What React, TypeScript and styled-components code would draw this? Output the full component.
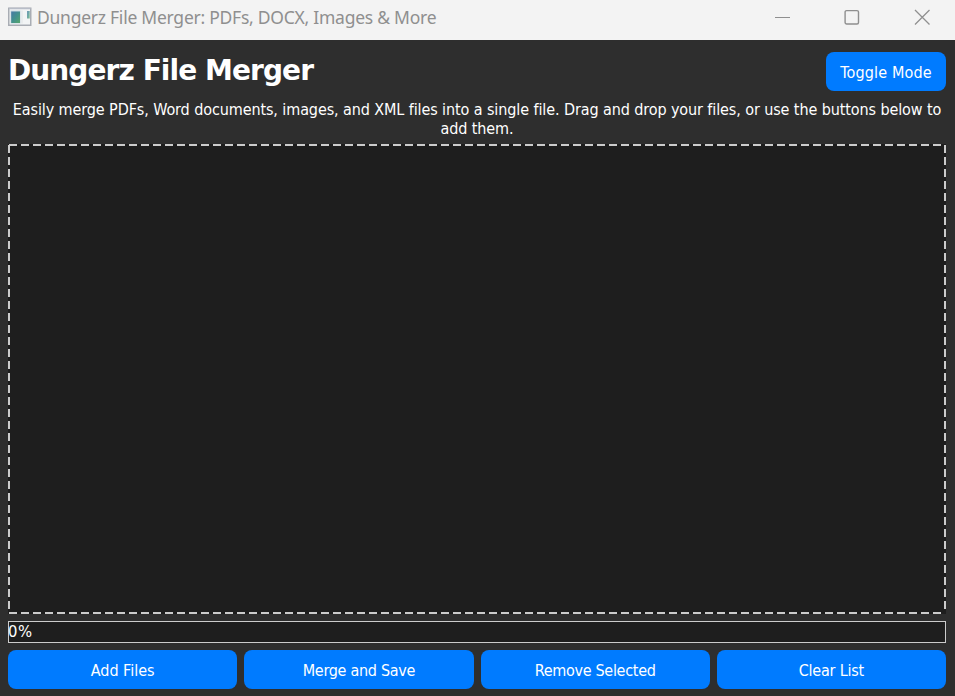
import React from "react";
import styled, { createGlobalStyle } from "styled-components";

const GlobalStyle = createGlobalStyle`
  * { box-sizing: border-box; }
  body { margin: 0; background: #2e2e2e; }
`;

const Window = styled.div`
  display: flex;
  flex-direction: column;
  width: 100%;
  height: 100vh;
  min-height: 696px;
  overflow: hidden;
  background: #2e2e2e;
  color: #fff;
  font: 16px/19px "DejaVu Sans Condensed", "DejaVu Sans", sans-serif;
`;

const TitleBar = styled.header`
  display: flex;
  align-items: center;
  flex: none;
  height: 40px;
  padding: 0 25px 6px 8px;
  background: #f3f3f3;
  color: #8f8f8f;
`;

const WindowTitle = styled.span`
  flex: 1;
  margin-left: 5px;
  font: 17.5px/24px "Noto Sans", sans-serif;
  letter-spacing: -0.25px;
  white-space: nowrap;
`;

const WindowControls = styled.div`
  display: flex;
  align-items: center;
  gap: 54px;

  svg { display: block; }
`;

const Content = styled.main`
  display: flex;
  flex-direction: column;
  flex: 1;
  padding: 12px 9px 7px 8px;
`;

const HeaderRow = styled.div`
  display: flex;
  align-items: center;
  justify-content: space-between;
  height: 39px;
`;

const Heading = styled.h1`
  margin: -2px 0 0;
  font-family: "DejaVu Sans", sans-serif;
  font-size: 28px;
  line-height: 36px;
  font-weight: 700;
  letter-spacing: -0.92px;
`;

const Button = styled.button<{ $width?: number; $tracking?: number }>`
  flex: ${(p) => (p.$width ? `0 0 ${p.$width}px` : "1 1 0")};
  height: 39px;
  padding: 1px 0 0;
  border: 0;
  border-radius: 8px;
  background: #007bff;
  color: #fff;
  font: inherit;
  letter-spacing: ${(p) => p.$tracking ?? -0.3}px;
`;

const Description = styled.p`
  margin: 9px 0 6px;
  text-align: center;
  letter-spacing: -0.1px;
`;

const horizontalDash = "repeating-linear-gradient(90deg, #ccc 0 8px, transparent 8px 12px)";
const verticalDash = "repeating-linear-gradient(180deg, #ccc 0 8px, transparent 8px 12px)";

const DropZone = styled.div`
  flex: 1;
  background:
    ${horizontalDash} 1px 0 / 936px 2px no-repeat,
    ${horizontalDash} 1px 100% / 936px 2px no-repeat,
    ${verticalDash} 0 1px / 2px 468px no-repeat,
    ${verticalDash} 100% 1px / 2px 468px no-repeat,
    #1e1e1e;
`;

const ProgressBar = styled.div`
  flex: none;
  height: 22px;
  margin: 7px 0;
  border: 1px solid #ccc;
  background: #1e1e1e;
  font-size: 16.5px;
  line-height: 19px;
  letter-spacing: 0.6px;
  text-indent: -1px;
`;

const ActionRow = styled.div`
  display: flex;
  gap: 7px;
`;

const AppIcon = () => (
  <svg width="24" height="20" viewBox="0 0 24 20">
    <defs>
      <linearGradient id="screen" x1="0" y1="0" x2="1" y2="1">
        <stop offset="0" stopColor="#4779a6" />
        <stop offset="0.5" stopColor="#43918d" />
        <stop offset="1" stopColor="#57a66c" />
      </linearGradient>
    </defs>
    <rect x="0.75" y="1.25" width="22" height="17" fill="#f2f4f5" stroke="#a9adb4" strokeWidth="1.5" />
    <path d="M1 1.5h21.5" stroke="#b8bdc8" strokeWidth="1.5" />
    <rect x="2.5" y="3.5" width="10" height="13" fill="#c5d6de" />
    <rect x="3.2" y="4.5" width="8.8" height="11.5" fill="url(#screen)" />
    <path d="M14 3.5v13" stroke="#dfe3e6" />
    <rect x="19" y="4" width="2.7" height="7.5" fill="url(#screen)" opacity="0.75" />
  </svg>
);

export default function App() {
  return (
    <>
      <GlobalStyle />
      <Window>
        <TitleBar>
          <AppIcon />
          <WindowTitle>Dungerz File Merger: PDFs, DOCX, Images &amp; More</WindowTitle>
          <WindowControls>
            <svg width="16" height="16" viewBox="0 0 16 16">
              <path d="M1 8.5h15" stroke="#8f8f8f" />
            </svg>
            <svg width="16" height="16" viewBox="0 0 16 16">
              <rect x="1.1" y="1.6" width="13.4" height="13.4" rx="1.5" fill="none" stroke="#8f8f8f" strokeWidth="1.4" />
            </svg>
            <svg width="16" height="16" viewBox="0 0 16 16">
              <path d="M1 1l14.5 14.5M15.5 1L1 15.5" stroke="#8f8f8f" strokeWidth="1.3" />
            </svg>
          </WindowControls>
        </TitleBar>
        <Content>
          <HeaderRow>
            <Heading>Dungerz File Merger</Heading>
            <Button $width={120} $tracking={0.15}>Toggle Mode</Button>
          </HeaderRow>
          <Description>
            Easily merge PDFs, Word documents, images, and XML files into a single file. Drag and drop your files, or use the buttons below to add them.
          </Description>
          <DropZone />
          <ProgressBar>0%</ProgressBar>
          <ActionRow>
            <Button $tracking={0}>Add Files</Button>
            <Button>Merge and Save</Button>
            <Button>Remove Selected</Button>
            <Button $tracking={-0.2}>Clear List</Button>
          </ActionRow>
        </Content>
      </Window>
    </>
  );
}
